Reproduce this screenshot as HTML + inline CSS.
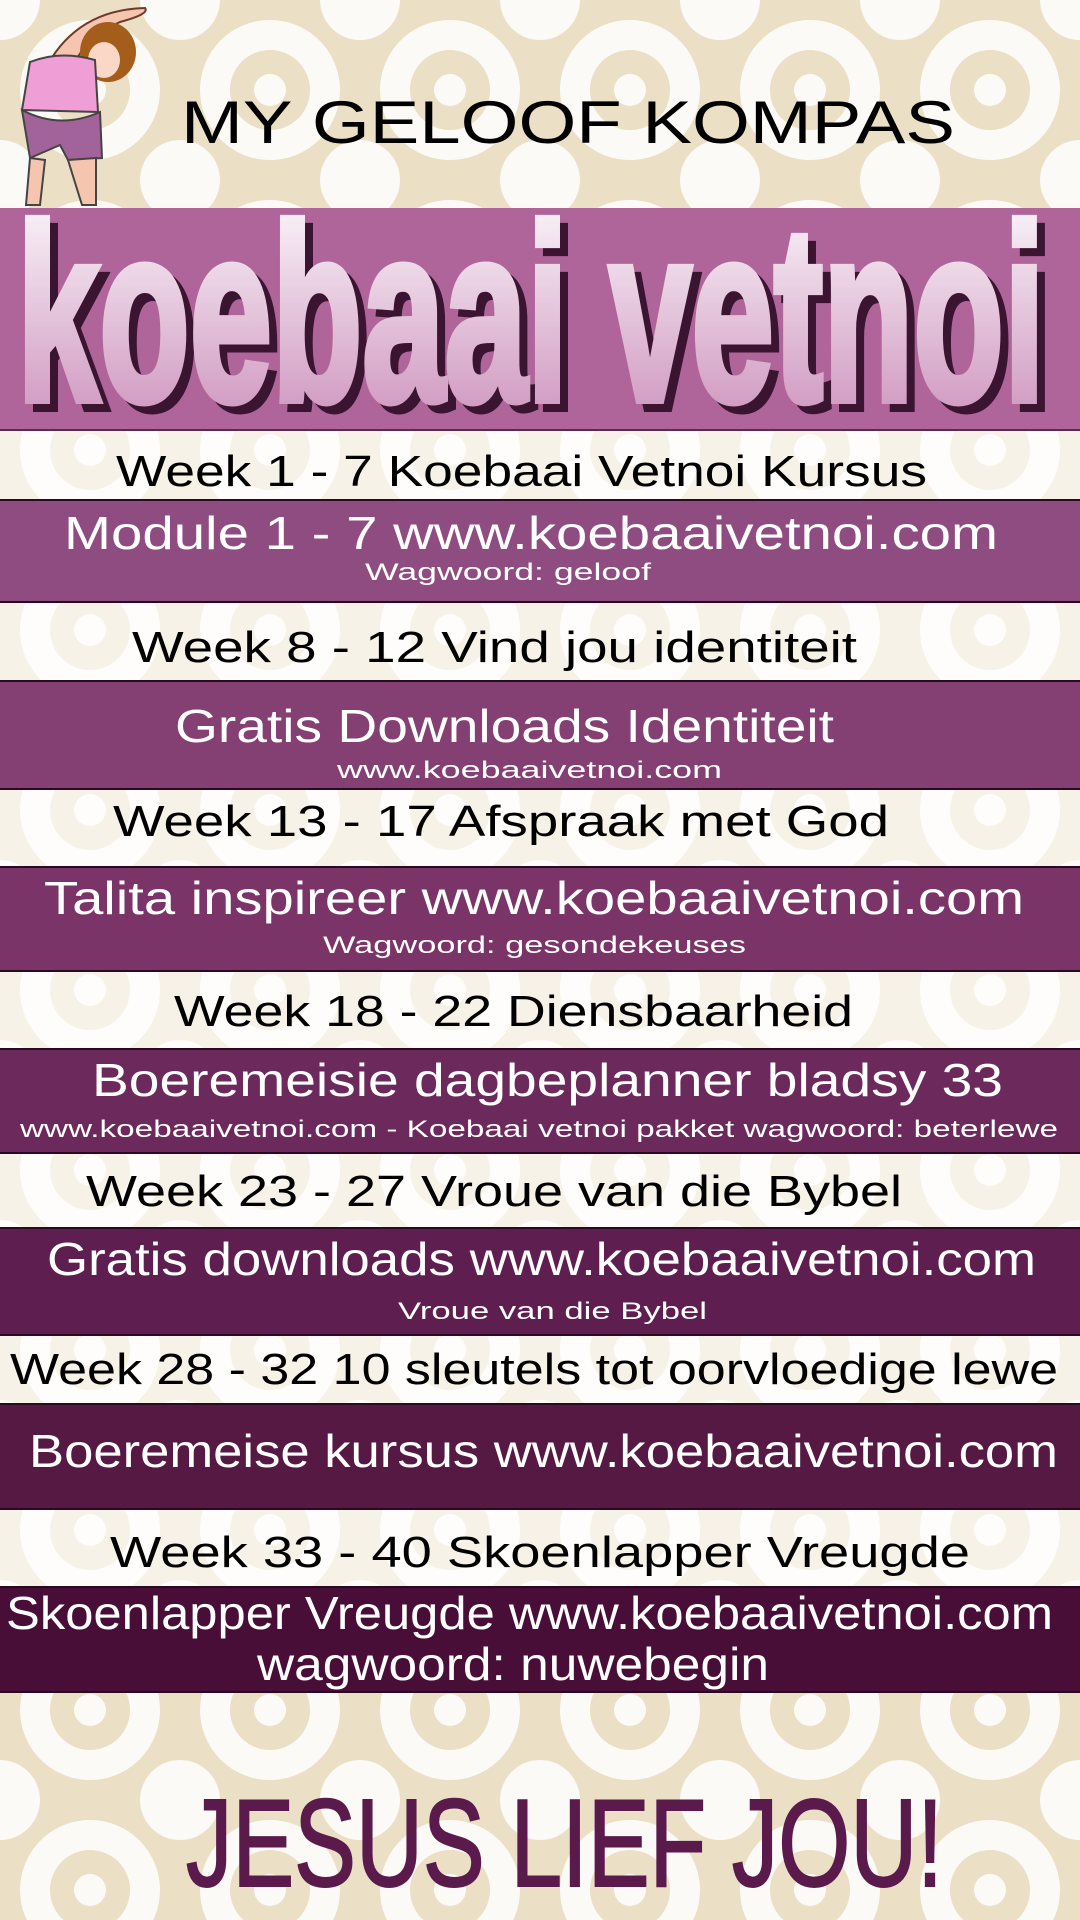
<!DOCTYPE html>
<html><head><meta charset="utf-8"><style>
html,body{margin:0;padding:0;width:1080px;height:1920px;overflow:hidden;background:#efe6d3}
svg{display:block}
</style></head><body>
<svg width="1080" height="1920" viewBox="0 0 1080 1920" xmlns="http://www.w3.org/2000/svg" font-family="'Liberation Sans', sans-serif">
<defs>
<linearGradient id="kg" x1="0" y1="0" x2="0" y2="1"><stop offset="0" stop-color="#ffffff"/><stop offset="1" stop-color="#c98ab8"/></linearGradient>
<pattern id="pt" width="180" height="180" patternUnits="userSpaceOnUse">
<rect width="180" height="180" fill="#ebdfc6"/>
<circle cx="90" cy="90" r="55" fill="none" stroke="#fcfaf6" stroke-width="30"/>
<circle cx="90" cy="90" r="16" fill="#fcfaf6"/>
<circle cx="0" cy="0" r="40" fill="#fcfaf6"/><circle cx="180" cy="0" r="40" fill="#fcfaf6"/>
<circle cx="0" cy="180" r="40" fill="#fcfaf6"/><circle cx="180" cy="180" r="40" fill="#fcfaf6"/>
</pattern>
</defs>
<rect width="1080" height="1920" fill="url(#pt)"/>
<!-- girl -->
<path d="M40 80 Q70 10 145 8 Q150 14 120 22 Q80 40 70 75Z" fill="#f6c5b0" stroke="#6b3a2a" stroke-width="2"/>
<ellipse cx="108" cy="52" rx="28" ry="30" fill="#a55d1c"/>
<ellipse cx="104" cy="60" rx="16" ry="18" fill="#fbd7c8"/>
<path d="M30 62 Q60 50 95 60 L98 112 L22 110Z" fill="#ef9fd6" stroke="#444" stroke-width="2"/>
<path d="M22 110 Q60 130 100 112 L102 158 L68 160 L60 145 L30 158Z" fill="#a2639a" stroke="#444" stroke-width="2"/>
<path d="M30 158 L26 205 L40 205 L45 160Z M68 160 L82 205 L96 205 L96 158Z" fill="#f6c5b0" stroke="#444" stroke-width="2"/>
<text x="181" y="143" font-size="60" textLength="774" lengthAdjust="spacingAndGlyphs" fill="#000">MY GELOOF KOMPAS</text>
<!-- banner -->
<rect x="0" y="208" width="1080" height="223" fill="#b0659a"/>
<rect x="0" y="429" width="1080" height="2" fill="#5a2a4f"/>
<text x="25" y="408" font-size="250" font-weight="bold" textLength="1028" lengthAdjust="spacingAndGlyphs" fill="#3a1430" stroke="#3a1430" stroke-width="8">koebaai vetnoi</text>
<text x="17" y="400" font-size="250" font-weight="bold" textLength="1028" lengthAdjust="spacingAndGlyphs" fill="url(#kg)" stroke="url(#kg)" stroke-width="8">koebaai vetnoi</text>
<!-- light strips -->
<g fill="#ffffff" fill-opacity="0.6">
<rect y="431" width="1080" height="69"/><rect y="602" width="1080" height="79"/><rect y="789" width="1080" height="78"/><rect y="971" width="1080" height="78"/><rect y="1153" width="1080" height="75"/><rect y="1335" width="1080" height="69"/><rect y="1509" width="1080" height="78"/>
</g>
<!-- bands -->
<g stroke="#2a0a20" stroke-width="2">
<rect x="-2" y="500" width="1084" height="102" fill="#8e4c80"/>
<rect x="-2" y="681" width="1084" height="108" fill="#843f73"/>
<rect x="-2" y="867" width="1084" height="104" fill="#7a3468"/>
<rect x="-2" y="1049" width="1084" height="104" fill="#6c295c"/>
<rect x="-2" y="1228" width="1084" height="107" fill="#5e1f50"/>
<rect x="-2" y="1404" width="1084" height="105" fill="#561944"/>
<rect x="-2" y="1587" width="1084" height="105" fill="#480e37"/>
</g>
<g fill="#000" font-size="44">
<text x="116" y="486" textLength="811" lengthAdjust="spacingAndGlyphs">Week 1 - 7 Koebaai Vetnoi Kursus</text>
<text x="132" y="662" textLength="725" lengthAdjust="spacingAndGlyphs">Week 8 - 12 Vind jou identiteit</text>
<text x="113" y="836" textLength="776" lengthAdjust="spacingAndGlyphs">Week 13 - 17 Afspraak met God</text>
<text x="174" y="1026" textLength="679" lengthAdjust="spacingAndGlyphs">Week 18 - 22 Diensbaarheid</text>
<text x="86" y="1206" textLength="816" lengthAdjust="spacingAndGlyphs">Week 23 - 27 Vroue van die Bybel</text>
<text x="10" y="1384" textLength="1048" lengthAdjust="spacingAndGlyphs">Week 28 - 32 10 sleutels tot oorvloedige lewe</text>
<text x="110" y="1567" textLength="860" lengthAdjust="spacingAndGlyphs">Week 33 - 40 Skoenlapper Vreugde</text>
</g>
<g fill="#fff" font-size="46">
<text x="64" y="549" textLength="934" lengthAdjust="spacingAndGlyphs">Module 1 - 7 www.koebaaivetnoi.com</text>
<text x="175" y="742" textLength="659" lengthAdjust="spacingAndGlyphs">Gratis Downloads Identiteit</text>
<text x="44" y="914" textLength="980" lengthAdjust="spacingAndGlyphs">Talita inspireer www.koebaaivetnoi.com</text>
<text x="92" y="1096" textLength="911" lengthAdjust="spacingAndGlyphs">Boeremeisie dagbeplanner bladsy 33</text>
<text x="47" y="1275" textLength="989" lengthAdjust="spacingAndGlyphs">Gratis downloads www.koebaaivetnoi.com</text>
<text x="29" y="1467" textLength="1029" lengthAdjust="spacingAndGlyphs">Boeremeise kursus www.koebaaivetnoi.com</text>
<text x="6" y="1629" textLength="1047" lengthAdjust="spacingAndGlyphs">Skoenlapper Vreugde www.koebaaivetnoi.com</text>
<text x="257" y="1680" textLength="512" lengthAdjust="spacingAndGlyphs">wagwoord: nuwebegin</text>
</g>
<g fill="#fff" font-size="24">
<text x="365" y="580" textLength="286" lengthAdjust="spacingAndGlyphs">Wagwoord: geloof</text>
<text x="337" y="778" textLength="385" lengthAdjust="spacingAndGlyphs">www.koebaaivetnoi.com</text>
<text x="323" y="953" textLength="423" lengthAdjust="spacingAndGlyphs">Wagwoord: gesondekeuses</text>
<text x="20" y="1137" textLength="1038" lengthAdjust="spacingAndGlyphs">www.koebaaivetnoi.com - Koebaai vetnoi pakket wagwoord: beterlewe</text>
<text x="398" y="1319" textLength="309" lengthAdjust="spacingAndGlyphs">Vroue van die Bybel</text>
</g>
<text x="186" y="1886" font-size="124" textLength="757" lengthAdjust="spacingAndGlyphs" fill="#5a1a4c" stroke="#5a1a4c" stroke-width="2">JESUS LIEF JOU!</text>
</svg>
</body></html>
